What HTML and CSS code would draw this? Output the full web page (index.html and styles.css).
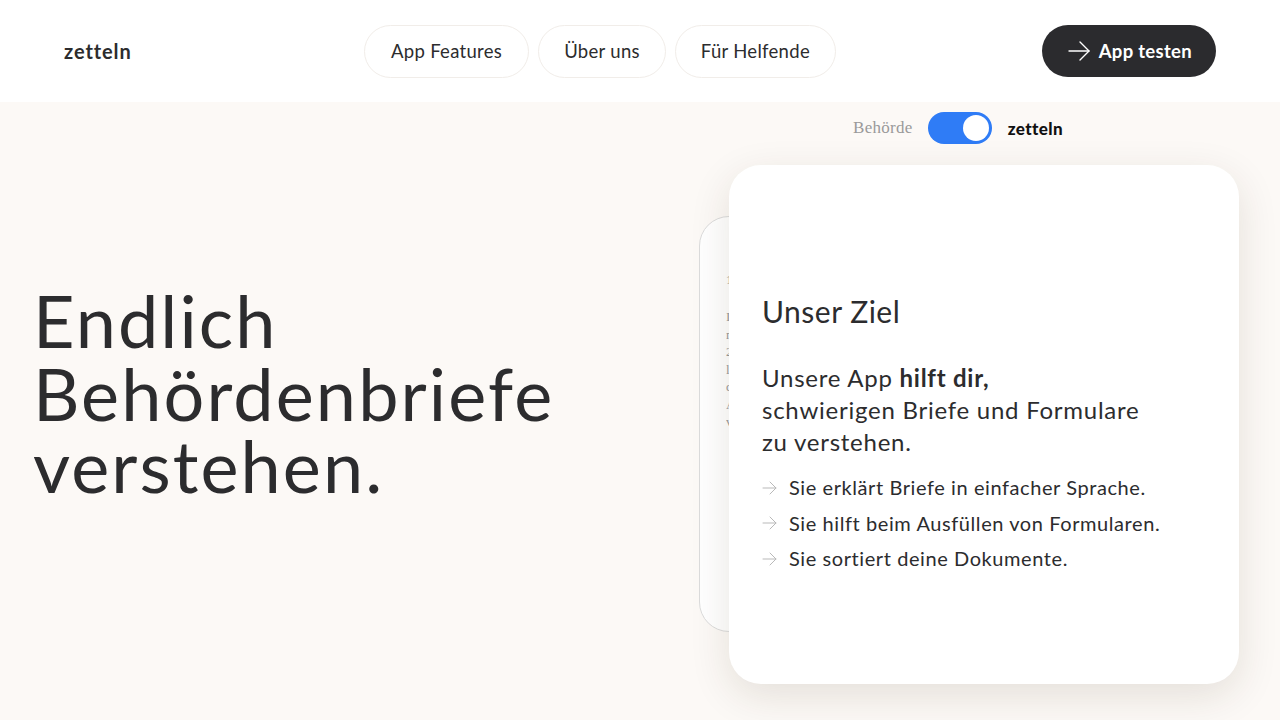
FILE: index.html
```html
<!DOCTYPE html>
<html lang="de">
<head>
<meta charset="utf-8">
<title>zetteln</title>
<link rel="stylesheet" href="styles.css">
</head>
<body>
<header class="site-header">
  <div class="logo">zetteln</div>
  <nav class="nav">
    <a class="nav-pill" href="#">App Features</a>
    <a class="nav-pill" href="#">Über uns</a>
    <a class="nav-pill" href="#">Für Helfende</a>
  </nav>
  <a class="cta" href="#">
    <svg class="cta-icon" width="24" height="20" viewBox="0 0 24 20" fill="none" stroke="currentColor" stroke-width="1.4" stroke-linecap="round" stroke-linejoin="round">
      <path d="M2 10h20"/>
      <path d="M13 1l9 9-9 9"/>
    </svg>
    <span>App testen</span>
  </a>
</header>
<main class="hero">
  <h1 class="hero-title"><span class="title-line">Endlich</span><span class="title-line">Behördenbriefe</span><span class="title-line">verstehen.</span></h1>
  <section class="showcase">
    <div class="toggle-row">
      <span class="toggle-label-off">Behörde</span>
      <span class="toggle"><span class="toggle-knob"></span></span>
      <span class="toggle-label-on">zetteln</span>
    </div>
    <div class="stack">
      <div class="back-card">
        <p class="letter-subject">1.</p>
        <p class="letter-body">Ihr Antrag 2024 liegt dem Amt vor.</p>
      </div>
      <div class="front-card">
        <h2 class="card-title">Unser Ziel</h2>
        <p class="card-lead">Unsere App <strong>hilft dir,</strong><br>schwierigen Briefe und Formulare<br>zu verstehen.</p>
        <ul class="card-list">
          <li><svg class="li-icon" width="15" height="14" viewBox="0 0 15 14" fill="none" stroke="currentColor" stroke-width="1" stroke-linecap="round" stroke-linejoin="round"><path d="M1 7h13"/><path d="M8 1l6 6-6 6"/></svg>Sie erklärt Briefe in einfacher Sprache.</li>
          <li><svg class="li-icon" width="15" height="14" viewBox="0 0 15 14" fill="none" stroke="currentColor" stroke-width="1" stroke-linecap="round" stroke-linejoin="round"><path d="M1 7h13"/><path d="M8 1l6 6-6 6"/></svg>Sie hilft beim Ausfüllen von Formularen.</li>
          <li><svg class="li-icon" width="15" height="14" viewBox="0 0 15 14" fill="none" stroke="currentColor" stroke-width="1" stroke-linecap="round" stroke-linejoin="round"><path d="M1 7h13"/><path d="M8 1l6 6-6 6"/></svg>Sie sortiert deine Dokumente.</li>
        </ul>
      </div>
    </div>
  </section>
</main>
</body>
</html>
```

FILE: styles.css
```css
* { box-sizing: border-box; }
html, body { margin: 0; padding: 0; }
body {
  font-family: "Lato", "Noto Sans", sans-serif;
  color: #2c2c2e;
  background: #fcf9f6;
  width: 1280px;
  height: 720px;
  overflow: hidden;
}
a { text-decoration: none; color: inherit; }

.site-header {
  height: 102px;
  background: #ffffff;
  display: flex;
  align-items: center;
  padding: 0 64px;
}
.logo {
  font-size: 20px;
  font-weight: 700;
  letter-spacing: 0.9px;
  width: 80px;
  color: #2c2c2e;
}
.nav {
  display: flex;
  gap: 9px;
  margin-left: 220px;
}
.nav-pill {
  height: 53px;
  display: flex;
  align-items: center;
  padding: 0 26px;
  border: 1px solid #f1ede9;
  border-radius: 27px;
  font-size: 18.5px;
  letter-spacing: 0.3px;
  color: #2c2c2e;
}
.nav-pill + .nav-pill { padding: 0 25px; }
.cta {
  margin-left: auto;
  height: 52px;
  display: flex;
  align-items: center;
  gap: 8px;
  padding: 0 24px 0 25px;
  background: #2b2b2e;
  color: #ffffff;
  border-radius: 26px;
  font-size: 18.5px;
  font-weight: 700;
  letter-spacing: 0.3px;
}
.cta-icon { display: block; }

.hero {
  display: flex;
  height: 618px;
}
.hero-title {
  margin: 0;
  padding: 182px 0 0 33px;
  width: 699px;
  font-size: 72px;
  line-height: 72.5px;
  font-weight: 400;
  letter-spacing: 2.1px;
  color: #2c2c2e;
}
.title-line { display: block; }

.showcase {
  width: 540px;
  display: flex;
  flex-direction: column;
}
.toggle-row {
  margin-top: 10px;
  height: 32px;
  display: flex;
  align-items: center;
  padding-left: 154px;
}
.toggle-label-off {
  font-family: "Liberation Serif", "DejaVu Serif", serif;
  font-size: 17px;
  letter-spacing: 0.3px;
  color: #9a9a9a;
}
.toggle {
  margin-left: 15px;
  width: 64px;
  height: 32px;
  border-radius: 16px;
  background: #2f7cf6;
  display: flex;
  align-items: center;
  justify-content: flex-end;
  padding-right: 3px;
}
.toggle-knob {
  width: 26px;
  height: 26px;
  border-radius: 50%;
  background: #ffffff;
}
.toggle-label-on {
  margin-left: 16px;
  font-size: 17px;
  font-weight: 900;
  color: #111111;
  letter-spacing: 0.4px;
}

.stack {
  position: relative;
  margin-top: 21px;
  height: 519px;
}
.back-card {
  position: absolute;
  left: 0;
  top: 51px;
  width: 64px;
  height: 416px;
  background: #ffffff;
  border: 1px solid #dcdcdc;
  border-radius: 30px;
  padding: 54px 0 0 26px;
  font-family: "Liberation Serif", "DejaVu Serif", serif;
  color: #9a9a9a;
  overflow: hidden;
}
.letter-subject {
  margin: 0 0 20px;
  width: 30px;
  font-size: 13px;
  line-height: 17px;
}
.letter-body {
  margin: 0;
  width: 30px;
  font-size: 13px;
  line-height: 17.5px;
  word-break: break-all;
  overflow: hidden;
}
.front-card {
  position: relative;
  margin-left: 30px;
  width: 510px;
  height: 519px;
  background: #ffffff;
  border-radius: 32px;
  box-shadow: 0 12px 40px rgba(60, 40, 20, 0.12);
  padding: 128px 20px 0 33px;
}
.card-title {
  margin: 0;
  font-size: 30px;
  line-height: 36px;
  font-weight: 400;
  letter-spacing: 0.5px;
  color: #2c2c2e;
}
.card-lead {
  margin: 33px 0 0;
  font-size: 24px;
  line-height: 32px;
  letter-spacing: 0.75px;
  color: #2c2c2e;
}
.card-lead strong { font-weight: 700; }
.card-list {
  list-style: none;
  margin: 12px 0 0;
  padding: 0;
}
.card-list li {
  display: flex;
  align-items: center;
  font-size: 20px;
  line-height: 35.5px;
  letter-spacing: 0.58px;
  color: #2c2c2e;
}
.li-icon {
  color: #b9b9b9;
  margin-right: 12px;
  flex: none;
}
```
